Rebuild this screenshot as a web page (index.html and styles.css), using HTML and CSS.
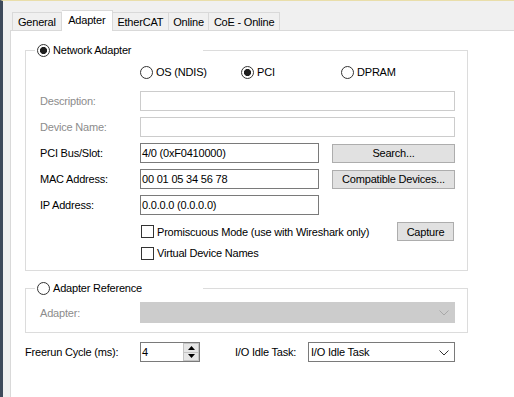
FILE: index.html
```html
<!DOCTYPE html>
<html>
<head>
<meta charset="utf-8">
<link rel="stylesheet" href="styles.css">
</head>
<body>
<div class="frame">
  <div class="tabs">
    <div class="tab">General</div>
    <div class="tab active">Adapter</div>
    <div class="tab">EtherCAT</div>
    <div class="tab">Online</div>
    <div class="tab">CoE - Online</div>
  </div>
  <div class="panel">
    <fieldset class="group">
      <legend class="legend"><span class="rb checked"></span><span>Network Adapter</span></legend>
      <div class="g-body g1">
        <div class="radios">
          <div class="radio r-os"><span class="rb"></span><span>OS (NDIS)</span></div>
          <div class="radio r-pci"><span class="rb checked"></span><span>PCI</span></div>
          <div class="radio"><span class="rb"></span><span>DPRAM</span></div>
        </div>
        <div class="form">
          <div class="lbl dis">Description:</div>
          <div class="field dis wide"></div>
          <div class="lbl dis">Device Name:</div>
          <div class="field dis wide"></div>
          <div class="lbl">PCI Bus/Slot:</div>
          <div class="field">4/0 (0xF0410000)</div>
          <div class="btn btn-col">Search...</div>
          <div class="lbl">MAC Address:</div>
          <div class="field">00 01 05 34 56 78</div>
          <div class="btn btn-col">Compatible Devices...</div>
          <div class="lbl">IP Address:</div>
          <div class="field">0.0.0.0 (0.0.0.0)</div>
        </div>
        <div class="checks">
          <div class="check-row">
            <div class="check"><span class="cb"></span><span>Promiscuous Mode (use with Wireshark only)</span></div>
            <div class="btn btn-capture">Capture</div>
          </div>
          <div class="check-row row2">
            <div class="check"><span class="cb"></span><span>Virtual Device Names</span></div>
          </div>
        </div>
      </div>
    </fieldset>
    <fieldset class="group group2">
      <legend class="legend"><span class="rb"></span><span>Adapter Reference</span></legend>
      <div class="g-body g2">
        <div class="lbl dis">Adapter:</div>
        <div class="combo disabled">
          <span></span>
          <svg class="chev" width="10" height="6" viewBox="0 0 10 6"><polyline points="0.5,0.5 5,5 9.5,0.5" fill="none" stroke="#a8a8a8" stroke-width="1"/></svg>
        </div>
      </div>
    </fieldset>
    <div class="bottom">
      <div class="lbl blbl">Freerun Cycle (ms):</div>
      <div class="spin">
        <span class="spin-val">4</span>
        <div class="spin-btns">
          <div class="sb"><svg width="7" height="4" viewBox="0 0 7 4"><polygon points="0,4 7,4 3.5,0" fill="#000"/></svg></div>
          <div class="sb"><svg width="7" height="4" viewBox="0 0 7 4"><polygon points="0,0 7,0 3.5,4" fill="#000"/></svg></div>
        </div>
      </div>
      <div class="lbl ilbl">I/O Idle Task:</div>
      <div class="combo task">
        <span>I/O Idle Task</span>
        <svg class="chev" width="10" height="6" viewBox="0 0 10 6"><polyline points="0.5,0.5 5,5 9.5,0.5" fill="none" stroke="#333" stroke-width="1"/></svg>
      </div>
    </div>
  </div>
</div>
</body>
</html>
```
FILE: styles.css
```css
html, body {
  margin: 0;
  padding: 0;
  height: 100%;
  overflow: hidden;
}
body {
  background: #f0f0f0;
  font-family: "Liberation Sans", Arial, sans-serif;
  font-size: 11px;
  letter-spacing: -0.2px;
  color: #000;
}
.frame {
  box-sizing: border-box;
  height: 100%;
  width: 100%;
  border-left: 3px solid #3e4a5b;
  border-top: 1px solid #e9deaa;
  padding-left: 7px;
  display: flex;
  flex-direction: column;
}
.tabs {
  display: flex;
  align-items: flex-end;
  height: 29px;
  box-sizing: border-box;
  padding-top: 9px;
  padding-left: 2px;
  flex: none;
}
.tab {
  box-sizing: border-box;
  height: 18px;
  padding: 1px 4.5px 0;
  border: 1px solid #d9d9d9;
  border-bottom: none;
  border-left: none;
  background: #f0f0f0;
  display: flex;
  align-items: center;
  white-space: nowrap;
}
.tab:first-child {
  border-left: 1px solid #d9d9d9;
  padding: 1px 5px 0;
}
.tab.active {
  height: 21px;
  margin-bottom: -1px;
  padding: 0 6.5px 2px;
  background: #fff;
  position: relative;
  z-index: 1;
}
.panel {
  box-sizing: border-box;
  flex: 1;
  background: #fff;
  border-top: 1px solid #d9d9d9;
  border-left: 1px solid #d9d9d9;
  padding: 11px 0 0 14px;
}
.group {
  box-sizing: border-box;
  width: 443px;
  margin: 0;
  padding: 0;
  border: 1px solid #dcdcdc;
  min-width: 0;
}
.group2 {
  margin-top: 9px;
}
.legend {
  box-sizing: border-box;
  width: 168px;
  height: 16px;
  margin-left: 9px;
  padding: 0 0 0 2px;
  display: flex;
  align-items: center;
  gap: 3px;
}
.rb {
  box-sizing: border-box;
  width: 13px;
  height: 13px;
  border: 1px solid #333;
  border-radius: 50%;
  background: #fff;
  flex: none;
}
.rb.checked {
  background: radial-gradient(circle, #1e1e1e 0, #1e1e1e 3.2px, #fff 3.9px);
}
.g-body.g1 {
  padding: 6px 12px 10px 14px;
}
.radios {
  display: flex;
  height: 16px;
  padding-left: 100px;
}
.radio {
  display: flex;
  align-items: center;
  gap: 3px;
}
.r-os { width: 101px; }
.r-pci { width: 100px; }
.form {
  margin-top: 11px;
  display: grid;
  grid-template-columns: 100px 179px 13px 123px;
  grid-auto-rows: 20px;
  row-gap: 6px;
}
.lbl {
  display: flex;
  align-items: center;
  white-space: nowrap;
}
.dis {
  color: #8c8c8c;
}
.field {
  box-sizing: border-box;
  border: 1px solid #7a7a7a;
  background: #fff;
  padding-left: 1px;
  display: flex;
  align-items: center;
  white-space: nowrap;
}
.field.dis {
  border-color: #cccccc;
}
.field.wide {
  grid-column: 2 / 5;
}
.btn {
  box-sizing: border-box;
  background: #e1e1e1;
  border: 1px solid #adadad;
  display: flex;
  align-items: center;
  justify-content: center;
  white-space: nowrap;
}
.btn-col {
  grid-column: 4;
  height: 19px;
  align-self: center;
}
.checks {
  margin-top: 7px;
  padding-left: 101px;
}
.check-row {
  display: flex;
  align-items: center;
  justify-content: space-between;
  height: 19px;
}
.check-row.row2 {
  height: 14px;
  margin-top: 5px;
}
.check {
  display: flex;
  align-items: center;
  gap: 3px;
}
.cb {
  box-sizing: border-box;
  width: 13px;
  height: 13px;
  border: 1px solid #333;
  background: #fff;
  flex: none;
}
.btn-capture {
  width: 57px;
  height: 19px;
  margin-right: 1px;
}
.g-body.g2 {
  padding: 6px 12px 9px 14px;
  display: flex;
}
.g2 .lbl {
  width: 100px;
}
.combo {
  box-sizing: border-box;
  height: 21px;
  border: 1px solid #7a7a7a;
  background: #fff;
  display: flex;
  align-items: center;
  justify-content: space-between;
  padding: 0 5px 0 2px;
  white-space: nowrap;
}
.combo.disabled {
  width: 315px;
  background: #cccccc;
  border-color: #cccccc;
}
.chev {
  display: block;
  margin-top: 1px;
}
.bottom {
  display: flex;
  align-items: center;
  height: 20px;
  margin-top: 9px;
}
.blbl {
  width: 115px;
  height: 20px;
}
.spin {
  box-sizing: border-box;
  width: 60px;
  height: 20px;
  border: 1px solid #7a7a7a;
  background: #fff;
  display: flex;
  justify-content: space-between;
}
.spin-val {
  padding-left: 1px;
  display: flex;
  align-items: center;
}
.spin-btns {
  width: 16px;
  display: flex;
  flex-direction: column;
}
.sb {
  box-sizing: border-box;
  flex: 1;
  background: #e6e6e6;
  border: 1px solid #c4c4c4;
  display: flex;
  align-items: center;
  justify-content: center;
}
.sb + .sb {
  border-top: none;
}
.ilbl {
  margin-left: 35px;
  width: 73px;
  height: 20px;
}
.combo.task {
  width: 147px;
  height: 20px;
}
```
